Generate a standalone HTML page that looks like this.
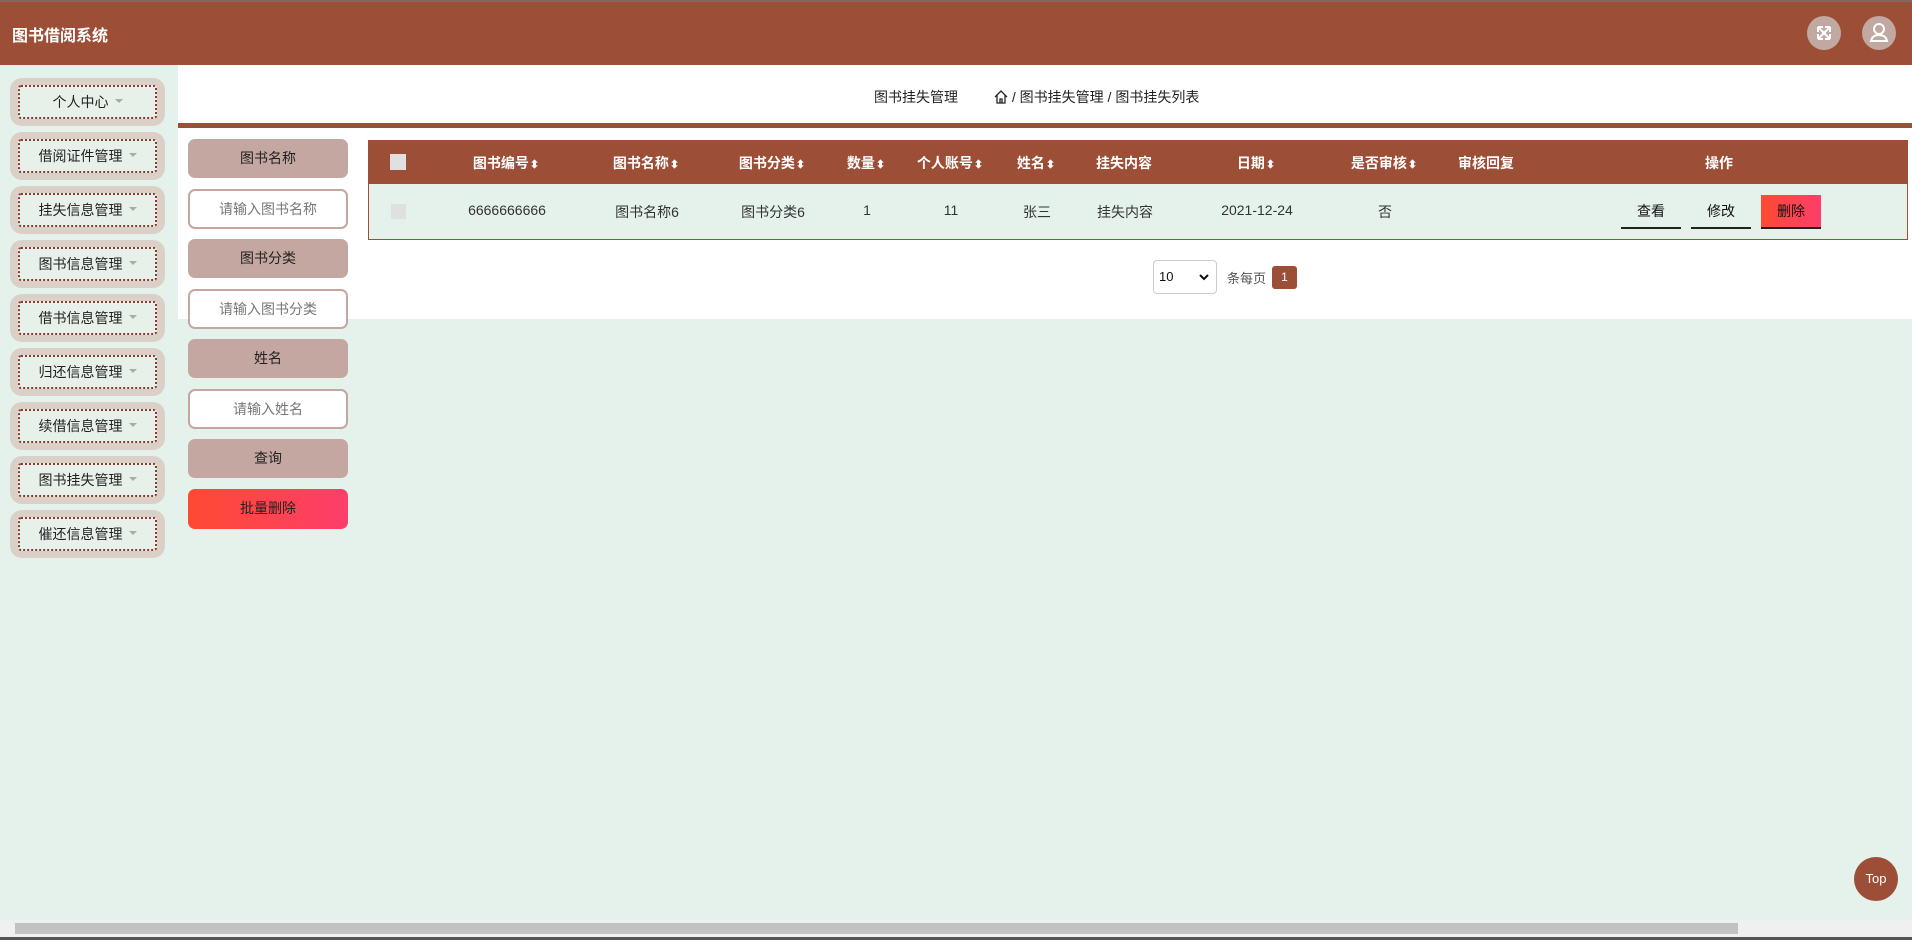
<!DOCTYPE html>
<html><head><meta charset="utf-8"><style>
*{box-sizing:border-box;margin:0;padding:0}
body{width:1912px;height:940px;overflow:hidden;background:#e5f1eb;font-family:"Liberation Sans","Noto Sans CJK SC",sans-serif;position:relative;font-size:14px;color:#333}
.abs{position:absolute}
.hdr{left:0;top:0;width:1912px;height:65px;background:#9c4f36;border-top:2px solid #7a6a62}
.title{left:12px;top:22px;color:#fff;font-size:16px;font-weight:bold}
.circ{width:34px;height:34px;border-radius:50%;background:#c1a8a1;top:16px}
.side{left:0;top:65px;width:165px;height:855px;background:#e5f1eb}
.mi{left:10px;width:155px;height:48px;border-radius:12px;background:#dbd0c8}
.mi div{position:absolute;left:8px;top:7px;right:8px;bottom:7px;border:2px dotted #8a3a2e;border-radius:3px;background:#e8f0ea;text-align:center;line-height:30px;font-size:14px;color:#222}
.mi div:after{content:"";display:inline-block;margin-left:6px;border:4px solid transparent;border-top-color:#aaa;vertical-align:0px}
.main{left:178px;top:65px;width:1734px;height:254px;background:#fff}
.bar{left:178px;top:123px;width:1734px;height:5px;background:#9c4f36}
.fb{left:188px;width:160px;height:39px;border-radius:7px;background:#c4a7a0;text-align:center;line-height:39px;font-size:14px;color:#222}
.fi{left:188px;width:160px;height:40px;border-radius:7px;background:#fff;border:2px solid #c4a7a0;text-align:center;line-height:36px;font-size:14px;color:#777}
.th{top:140px;left:368px;width:1540px;height:44px;background:#9c4f36}
.tr{top:184px;left:368px;width:1540px;height:56px;background:#e5f1eb;border:1px solid #9c4f36;border-top:none}
.c{position:absolute;transform:translateX(-50%);white-space:nowrap}
.th .c{color:#fff;font-weight:bold;top:13px;font-size:14px}
.tr .c{color:#333;top:18px;font-size:14px}
.s:after{content:"⬍";font-size:11px;margin-left:1px}
.ob{position:absolute;top:11px;height:34px;width:60px;text-align:center;line-height:32px;border-bottom:2px solid #222;color:#111;font-size:14px}
</style></head><body>
<div class="abs hdr"></div>
<div class="abs title">图书借阅系统</div>
<div class="abs circ" style="left:1807px"><svg width="34" height="34" viewBox="0 0 34 34" fill="none" stroke="#fff" stroke-width="2"><path d="M11 11l12 12M23 11L11 23M11 11h5M11 11v5M23 11h-5M23 11v5M11 23h5M11 23v-5M23 23h-5M23 23v-5"/></svg></div>
<div class="abs circ" style="left:1862px"><svg width="34" height="34" viewBox="0 0 34 34" fill="none" stroke="#fff" stroke-width="2"><circle cx="17" cy="13" r="5"/><path d="M9 25c1-5 5-6 8-6s7 1 8 6z"/></svg></div>
<div class="abs side"></div>
<div class="abs mi" style="top:78px"><div>个人中心</div></div>
<div class="abs mi" style="top:132px"><div>借阅证件管理</div></div>
<div class="abs mi" style="top:186px"><div>挂失信息管理</div></div>
<div class="abs mi" style="top:240px"><div>图书信息管理</div></div>
<div class="abs mi" style="top:294px"><div>借书信息管理</div></div>
<div class="abs mi" style="top:348px"><div>归还信息管理</div></div>
<div class="abs mi" style="top:402px"><div>续借信息管理</div></div>
<div class="abs mi" style="top:456px"><div>图书挂失管理</div></div>
<div class="abs mi" style="top:510px"><div>催还信息管理</div></div>
<div class="abs main"></div>
<div class="abs" style="left:874px;top:87px;font-size:14px;color:#222">图书挂失管理</div>
<div class="abs" style="left:994px;top:87px;font-size:14px;color:#222"><svg width="14" height="14" viewBox="0 0 14 14" fill="none" stroke="#222" stroke-width="1.3" style="vertical-align:-2px"><path d="M1 7L7 1l6 6M3 5v8h8V5M6 13V9h2v4"/></svg> / 图书挂失管理 / 图书挂失列表</div>
<div class="abs bar"></div>
<div class="abs fb" style="top:139px">图书名称</div>
<div class="abs fi" style="top:189px">请输入图书名称</div>
<div class="abs fb" style="top:239px">图书分类</div>
<div class="abs fi" style="top:289px">请输入图书分类</div>
<div class="abs fb" style="top:339px">姓名</div>
<div class="abs fi" style="top:389px">请输入姓名</div>
<div class="abs fb" style="top:439px">查询</div>
<div class="abs fb" style="top:489px;background:linear-gradient(90deg,#fe4a33,#fd3e6a);height:40px">批量删除</div>
<div class="abs th">
<div style="position:absolute;left:22px;top:14px;width:16px;height:16px;background:#e0e0e0"></div>
<span class="c s" style="left:138px">图书编号</span><span class="c s" style="left:278px">图书名称</span><span class="c s" style="left:404px">图书分类</span><span class="c s" style="left:498px">数量</span><span class="c s" style="left:582px">个人账号</span><span class="c s" style="left:668px">姓名</span><span class="c" style="left:756px">挂失内容</span><span class="c s" style="left:888px">日期</span><span class="c s" style="left:1016px">是否审核</span><span class="c" style="left:1118px">审核回复</span><span class="c" style="left:1351px">操作</span>
</div>
<div class="abs tr">
<div style="position:absolute;left:22px;top:20px;width:15px;height:15px;background:#dde2e0"></div>
<span class="c" style="left:138px">6666666666</span><span class="c" style="left:278px">图书名称6</span><span class="c" style="left:404px">图书分类6</span><span class="c" style="left:498px">1</span><span class="c" style="left:582px">11</span><span class="c" style="left:668px">张三</span><span class="c" style="left:756px">挂失内容</span><span class="c" style="left:888px">2021-12-24</span><span class="c" style="left:1016px">否</span>
<div class="ob" style="left:1252px">查看</div><div class="ob" style="left:1322px">修改</div><div class="ob" style="left:1392px;background:linear-gradient(90deg,#fe4a33,#fd3e6a)">删除</div>
</div>
<div class="abs" style="left:1153px;top:260px;width:64px;height:34px;border:1px solid #ccc;border-radius:4px;background:#fff;font-size:13px;line-height:32px;padding-left:5px;color:#111">10<svg style="position:absolute;right:7px;top:13px" width="10" height="7" viewBox="0 0 10 7" fill="none" stroke="#111" stroke-width="2"><path d="M1 1l4 4 4-4"/></svg></div>
<div class="abs" style="left:1227px;top:268px;font-size:13px;color:#555">条每页</div>
<div class="abs" style="left:1272px;top:266px;width:25px;height:23px;border-radius:3px;background:#9c4f36;color:#fff;font-size:12px;text-align:center;line-height:23px">1</div>
<div class="abs" style="left:1854px;top:857px;width:44px;height:44px;border-radius:50%;background:#9c4f36;color:#fff;font-size:13px;text-align:center;line-height:44px">Top</div>
<div class="abs" style="left:0;top:920px;width:1912px;height:17px;background:#f0f0f0"></div>
<div class="abs" style="left:15px;top:923px;width:1723px;height:11px;background:#c2c2c2"></div>
<div class="abs" style="left:0;top:937px;width:1912px;height:3px;background:#555"></div>
</body></html>
